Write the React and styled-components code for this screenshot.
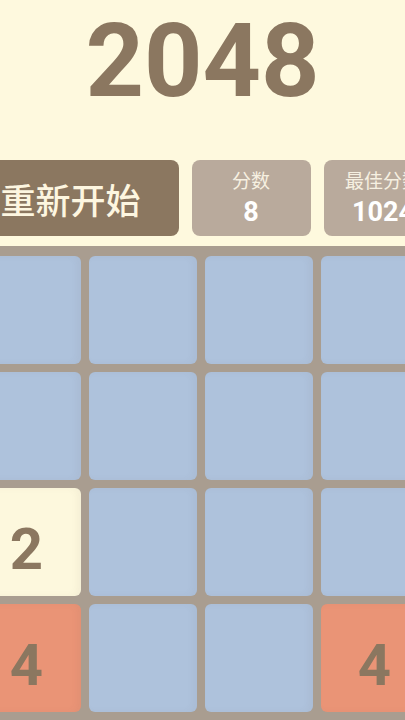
import React from 'react';
import styled, { createGlobalStyle } from 'styled-components';

const GlobalStyle = createGlobalStyle`
  html, body {
    margin: 0;
    padding: 0;
    background: #fef9de;
    overflow: hidden;
  }
  body {
    font-family: Roboto, 'Noto Sans CJK SC', sans-serif;
  }
`;

const board = [
  [0, 0, 0, 0],
  [0, 0, 0, 0],
  [2, 0, 0, 0],
  [4, 0, 0, 4],
];

const tileColors = {
  0: '#aec2dc',
  2: '#fdf8dd',
  4: '#ea9476',
};

const App = () => {
  return (
    <>
      <GlobalStyle />
      <Page>
        <Container>
          <Title>2048</Title>
          <Toolbar>
            <RestartButton>重新开始</RestartButton>
            <ScoreBox>
              <ScoreLabel>分数</ScoreLabel>
              <ScoreValue>8</ScoreValue>
            </ScoreBox>
            <ScoreBox>
              <ScoreLabel>最佳分数</ScoreLabel>
              <ScoreValue>1024</ScoreValue>
            </ScoreBox>
          </Toolbar>
          <Board>
            {board.flat().map((value, i) => (
              <Tile key={i} $value={value}>
                {value > 0 ? value : ''}
              </Tile>
            ))}
          </Board>
        </Container>
      </Page>
    </>
  );
};

export default App;

const Page = styled.div`
  width: 100%;
  min-height: 100vh;
  display: flex;
  flex-direction: column;
  align-items: center;
  background: #fef9de;
`;

const Container = styled.div`
  width: 480px;
  flex-shrink: 0;
  display: flex;
  flex-direction: column;
  align-items: center;
`;

const Title = styled.h1`
  margin: 0;
  padding-top: 10px;
  font-family: Roboto, sans-serif;
  font-size: 102px;
  line-height: 1;
  font-weight: 700;
  color: #8b7760;
`;

const Toolbar = styled.div`
  margin-top: 48px;
  width: 480px;
  height: 76px;
  display: grid;
  grid-template-columns: 216px 119px 119px;
  column-gap: 13px;
`;

const RestartButton = styled.button`
  border: none;
  border-radius: 8px;
  background: #8b7760;
  color: #fdf6e0;
  font-family: 'Noto Sans CJK SC', sans-serif;
  font-size: 35px;
  font-weight: 500;
  padding: 0;
  display: flex;
  align-items: center;
  justify-content: center;
`;

const ScoreBox = styled.div`
  border-radius: 8px;
  background: #b9aa9c;
  display: flex;
  flex-direction: column;
  align-items: center;
  justify-content: center;
  gap: 6px;
  overflow: hidden;
`;

const ScoreLabel = styled.span`
  font-family: 'Noto Sans CJK SC', sans-serif;
  font-size: 19px;
  line-height: 22px;
  color: #f6f0e1;
  white-space: nowrap;
`;

const ScoreValue = styled.span`
  font-family: Roboto, sans-serif;
  font-size: 27px;
  line-height: 30px;
  font-weight: 700;
  color: #ffffff;
`;

const Board = styled.div`
  align-self: flex-start;
  margin-top: 10px;
  width: 476px;
  box-sizing: border-box;
  padding: 10px;
  background: #a99d90;
  display: grid;
  grid-template-columns: repeat(4, 108px);
  grid-auto-rows: 108px;
  gap: 8px;
`;

const Tile = styled.div`
  border-radius: 6px;
  background: ${({ $value }) => tileColors[$value] || '#aec2dc'};
  box-shadow: inset -4px 0 6px rgba(90, 80, 70, 0.05);
  display: flex;
  align-items: center;
  justify-content: center;
  padding-top: 14px;
  box-sizing: border-box;
  font-family: Roboto, sans-serif;
  font-size: 58px;
  font-weight: 700;
  color: #8b7760;
`;
